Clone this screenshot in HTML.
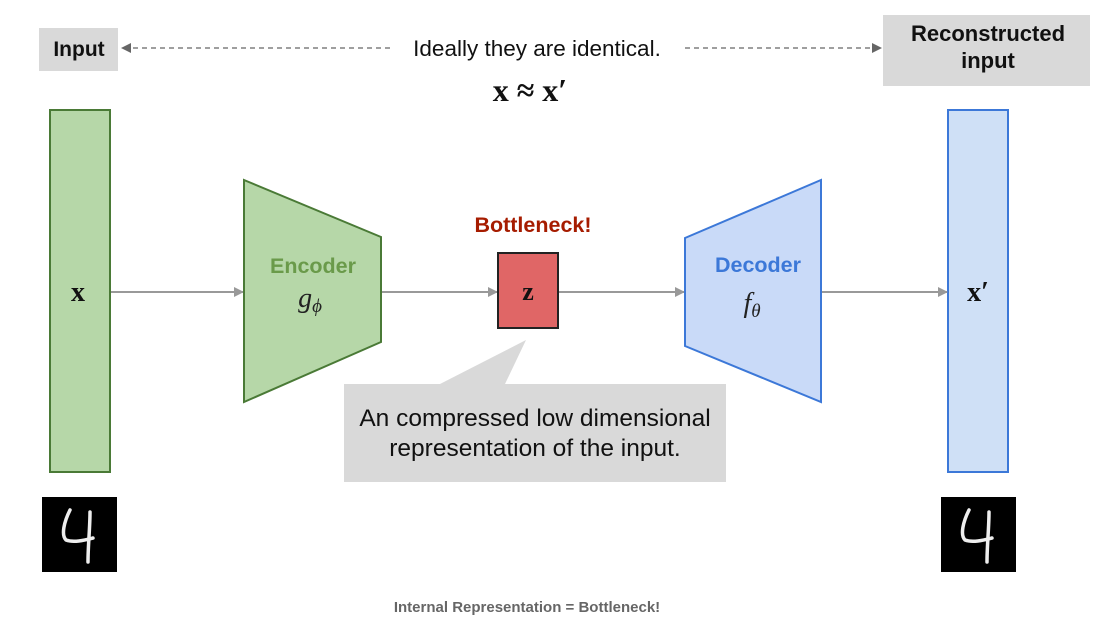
<!DOCTYPE html>
<html><head><style>
html,body{margin:0;padding:0;background:#fff;}
svg{display:block;}
</style></head><body>
<svg width="1108" height="623" viewBox="0 0 1108 623" xmlns="http://www.w3.org/2000/svg">
<defs>
<marker id="ah" markerWidth="10" markerHeight="10" refX="9" refY="5" orient="auto" markerUnits="userSpaceOnUse"><path d="M0,0 L10,5 L0,10 z" fill="#999"/></marker>
<marker id="ah2" markerWidth="10" markerHeight="10" refX="9" refY="5" orient="auto" markerUnits="userSpaceOnUse"><path d="M0,0 L10,5 L0,10 z" fill="#666"/></marker>
</defs>
<rect width="1108" height="623" fill="#fff"/>
<rect x="39" y="28" width="79" height="43" fill="#d9d9d9"/>
<text x="79" y="56" font-family="Liberation Sans, sans-serif" font-weight="bold" font-size="21" text-anchor="middle" fill="#111">Input</text>
<line x1="390" y1="48" x2="122" y2="48" stroke="#666" stroke-width="1.3" stroke-dasharray="5,4" marker-end="url(#ah2)"/>
<text x="537" y="56" font-family="Liberation Sans, sans-serif" font-size="22.5" text-anchor="middle" fill="#111">Ideally they are identical.</text>
<line x1="685" y1="48" x2="881" y2="48" stroke="#666" stroke-width="1.3" stroke-dasharray="5,4" marker-end="url(#ah2)"/>
<rect x="883" y="15" width="207" height="71" fill="#d9d9d9"/>
<text x="988" y="41" font-family="Liberation Sans, sans-serif" font-weight="bold" font-size="22" text-anchor="middle" fill="#111">Reconstructed</text>
<text x="988" y="68" font-family="Liberation Sans, sans-serif" font-weight="bold" font-size="22" text-anchor="middle" fill="#111">input</text>
<text x="530" y="101" font-family="Liberation Serif, serif" font-weight="bold" font-size="32" text-anchor="middle" fill="#111">x ≈ x′</text>
<rect x="50" y="110" width="60" height="362" fill="#b6d7a8" stroke="#4a7a36" stroke-width="2"/>
<text x="78" y="301" font-family="Liberation Serif, serif" font-weight="bold" font-size="28" text-anchor="middle" fill="#111">x</text>
<rect x="948" y="110" width="60" height="362" fill="#cfe0f6" stroke="#3c78d8" stroke-width="2"/>
<text x="978" y="301" font-family="Liberation Serif, serif" font-weight="bold" font-size="28" text-anchor="middle" fill="#111">x′</text>
<line x1="111" y1="292" x2="243" y2="292" stroke="#999" stroke-width="2" marker-end="url(#ah)"/>
<line x1="382" y1="292" x2="497" y2="292" stroke="#999" stroke-width="2" marker-end="url(#ah)"/>
<line x1="559" y1="292" x2="684" y2="292" stroke="#999" stroke-width="2" marker-end="url(#ah)"/>
<line x1="822" y1="292" x2="947" y2="292" stroke="#999" stroke-width="2" marker-end="url(#ah)"/>
<polygon points="244,180 381,237 381,342 244,402" fill="#b6d7a8" stroke="#4a7a36" stroke-width="2"/>
<text x="313" y="273" font-family="Liberation Sans, sans-serif" font-weight="bold" font-size="21.5" text-anchor="middle" fill="#6a9a4a">Encoder</text>
<text x="310" y="307" font-family="Liberation Serif, serif" font-style="italic" font-size="28" text-anchor="middle" fill="#222">g<tspan font-size="19" dy="5">ϕ</tspan></text>
<text x="533" y="232" font-family="Liberation Sans, sans-serif" font-weight="bold" font-size="21.5" text-anchor="middle" fill="#a61c00">Bottleneck!</text>
<rect x="498" y="253" width="60" height="75" fill="#e06666" stroke="#222" stroke-width="2"/>
<text x="528" y="300" font-family="Liberation Serif, serif" font-weight="bold" font-size="26" text-anchor="middle" fill="#111">z</text>
<polygon points="685,238 821,180 821,402 685,346" fill="#c9daf8" stroke="#3c78d8" stroke-width="2"/>
<text x="758" y="272" font-family="Liberation Sans, sans-serif" font-weight="bold" font-size="21.5" text-anchor="middle" fill="#3c78d8">Decoder</text>
<text x="752" y="312" font-family="Liberation Serif, serif" font-style="italic" font-size="28" text-anchor="middle" fill="#222">f<tspan font-size="19" dy="5">θ</tspan></text>
<polygon points="344,384 440,384 526,340 505,384 726,384 726,482 344,482" fill="#d9d9d9"/>
<text x="535" y="426" font-family="Liberation Sans, sans-serif" font-size="24.5" text-anchor="middle" fill="#111">An compressed low dimensional</text>
<text x="535" y="456" font-family="Liberation Sans, sans-serif" font-size="24.5" text-anchor="middle" fill="#111">representation of the input.</text>
<rect x="42" y="497" width="75" height="75" fill="#000"/>
<path d="M70,510 C64,522 61,535 66,540 C74,543 85,540 93,538 M90,512 C90,528 88,545 88,562" stroke="#eee" stroke-width="3.5" fill="none" stroke-linecap="round"/>
<rect x="941" y="497" width="75" height="75" fill="#000"/>
<path d="M969,510 C963,522 960,535 965,540 C973,543 984,540 992,538 M989,512 C989,528 987,545 987,562" stroke="#eee" stroke-width="3.5" fill="none" stroke-linecap="round"/>
<text x="527" y="612" font-family="Liberation Sans, sans-serif" font-weight="bold" font-size="15" text-anchor="middle" fill="#666">Internal Representation = Bottleneck!</text>
</svg>
</body></html>
